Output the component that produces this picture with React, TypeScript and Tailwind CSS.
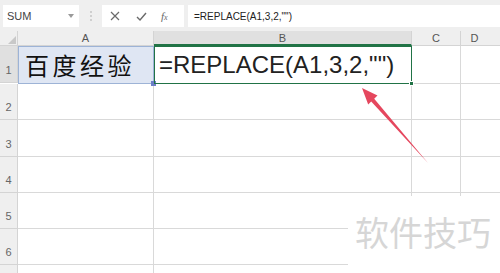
import React from 'react';

const rows = [1, 2, 3, 4, 5, 6, 7];
const rowHeights = ['h-[37px]', 'h-[36px]', 'h-[37px]', 'h-[36px]', 'h-[36px]', 'h-[36px]', 'h-[36px]'];

const Toolbar: React.FC = () => (
  <div className="flex h-[31px] items-start bg-[#efefef] pt-[5px]">
    {/* name box */}
    <div className="ml-[3px] flex h-[22px] w-[76px] items-center justify-between bg-white pl-[4px] pr-[4px]">
      <span className="text-[11px] text-[#444]">SUM</span>
      <svg width="6" height="4" viewBox="0 0 6 4" className="mr-[1px]">
        <path d="M0 0 L6 0 L3 4 Z" fill="#9a9a9a" />
      </svg>
    </div>
    {/* separator dots */}
    <div className="mx-[9px] flex h-[22px] w-[5px] flex-col items-center justify-center gap-[2px]">
      <span className="h-[2px] w-[2px] rounded-full bg-[#c4c4c4]" />
      <span className="h-[2px] w-[2px] rounded-full bg-[#c4c4c4]" />
      <span className="h-[2px] w-[2px] rounded-full bg-[#c4c4c4]" />
    </div>
    {/* cancel / enter / fx */}
    <div className="flex h-[22px] w-[82px] items-center bg-white">
      <svg width="10" height="10" viewBox="0 0 10 10" className="ml-[8px]">
        <path d="M1 1 L9 9 M9 1 L1 9" stroke="#6a6a6a" strokeWidth="1.2" />
      </svg>
      <svg width="11" height="9" viewBox="0 0 11 9" className="ml-[16px]">
        <path d="M1 5 L4 8 L10 1" stroke="#6a6a6a" strokeWidth="1.4" fill="none" />
      </svg>
      <span className="ml-[14px] text-[11px] italic text-[#666]" style={{ fontFamily: '"Liberation Serif", serif' }}>
        f<span className="text-[8px]">x</span>
      </span>
    </div>
    {/* formula */}
    <div className="ml-[4px] flex h-[22px] flex-1 items-center bg-white pl-[6px]">
      <span className="text-[10px] text-[#222]">=REPLACE(A1,3,2,"")</span>
    </div>
  </div>
);

const Sheet: React.FC = () => (
  <div className="grid grid-cols-[18px_136px_258px_49px_1fr]">
    {/* header row */}
    <div className="relative h-[15px] border-b border-r border-[#d4d4d4] bg-[#efefef]">
      <svg width="8" height="8" viewBox="0 0 8 8" className="absolute bottom-[1px] right-[1px]">
        <path d="M8 0 L8 8 L0 8 Z" fill="#c8c8c8" />
      </svg>
    </div>
    <div className="flex h-[15px] items-end justify-center border-b border-r border-[#d4d4d4] bg-[#efefef] text-[11px] leading-[13px] text-[#555]">A</div>
    <div className="flex h-[15px] items-end justify-center border-b-2 border-r border-b-[#217346] border-r-[#d4d4d4] bg-[#e0e0e0] text-[11px] leading-[12px] text-[#555]">B</div>
    <div className="flex h-[15px] items-end justify-center border-b border-r border-[#d4d4d4] bg-[#efefef] text-[11px] leading-[13px] text-[#555]">C</div>
    <div className="flex h-[15px] items-end justify-center border-b border-[#d4d4d4] bg-[#efefef] pr-[12px] text-[11px] leading-[13px] text-[#555]">D</div>

    {rows.map((r, i) => (
      <React.Fragment key={r}>
        {/* last row is only partly in view, its number falls below the edge */}
        <div
          className={`flex ${rowHeights[i]} items-end justify-center border-b border-r border-[#d4d4d4] pb-[6px] text-[11px] leading-[11px] text-[#666] ${
            r === 1 ? 'bg-[#e0e0e0]' : 'bg-[#efefef]'
          }`}
        >
          {r < 7 ? r : null}
        </div>
        {r === 1 ? (
          <>
            <div className="relative flex items-center border border-[#9db3d6] bg-[#dfe6f3] pl-[6px]">
              <span
                className="text-[24px] tracking-[3.5px] text-[#111]"
                style={{ fontFamily: '"Noto Sans CJK SC", sans-serif' }}
              >
                百度经验
              </span>
              <span className="absolute bottom-[-3px] right-[-3px] h-[5px] w-[5px] bg-[#6d7fc8]" />
            </div>
            <div className="relative z-10 flex items-center border border-[#217346] pl-[4px]">
              <span className="whitespace-nowrap text-[24px] text-[#222]">=REPLACE(A1,3,2,"")</span>
              <span className="absolute bottom-[-3px] right-[-3px] h-[5px] w-[5px] border border-white bg-[#217346]" />
            </div>
          </>
        ) : (
          <>
            <div className="border-b border-r border-[#d9d9d9]" />
            <div className="border-b border-r border-[#d9d9d9]" />
          </>
        )}
        <div className="border-b border-r border-[#d9d9d9]" />
        <div className="border-b border-[#d9d9d9]" />
      </React.Fragment>
    ))}
  </div>
);

export default function App() {
  return (
    <div
      className="relative h-[273px] w-[500px] overflow-hidden bg-white"
      style={{ fontFamily: '"Liberation Sans", Arial, sans-serif' }}
    >
      <Toolbar />
      <Sheet />

      {/* red arrow pointing at the formula */}
      <svg className="pointer-events-none absolute left-0 top-0" width="500" height="273" viewBox="0 0 500 273">
        <polygon
          points="362,88 377.5,95.5 374.2,98.8 428,163 371.2,101.4 368.2,104.5"
          fill="#e5475e"
        />
      </svg>

      {/* watermark */}
      <div className="absolute left-[348px] top-[196px] flex h-[77px] w-[152px] items-start bg-white pl-[7px] pt-[18px]">
        <span
          className="text-[34px] leading-[36px] text-[#d6d6d6]"
          style={{ fontFamily: '"Noto Sans CJK SC", sans-serif' }}
        >
          软件技巧
        </span>
      </div>
    </div>
  );
}
